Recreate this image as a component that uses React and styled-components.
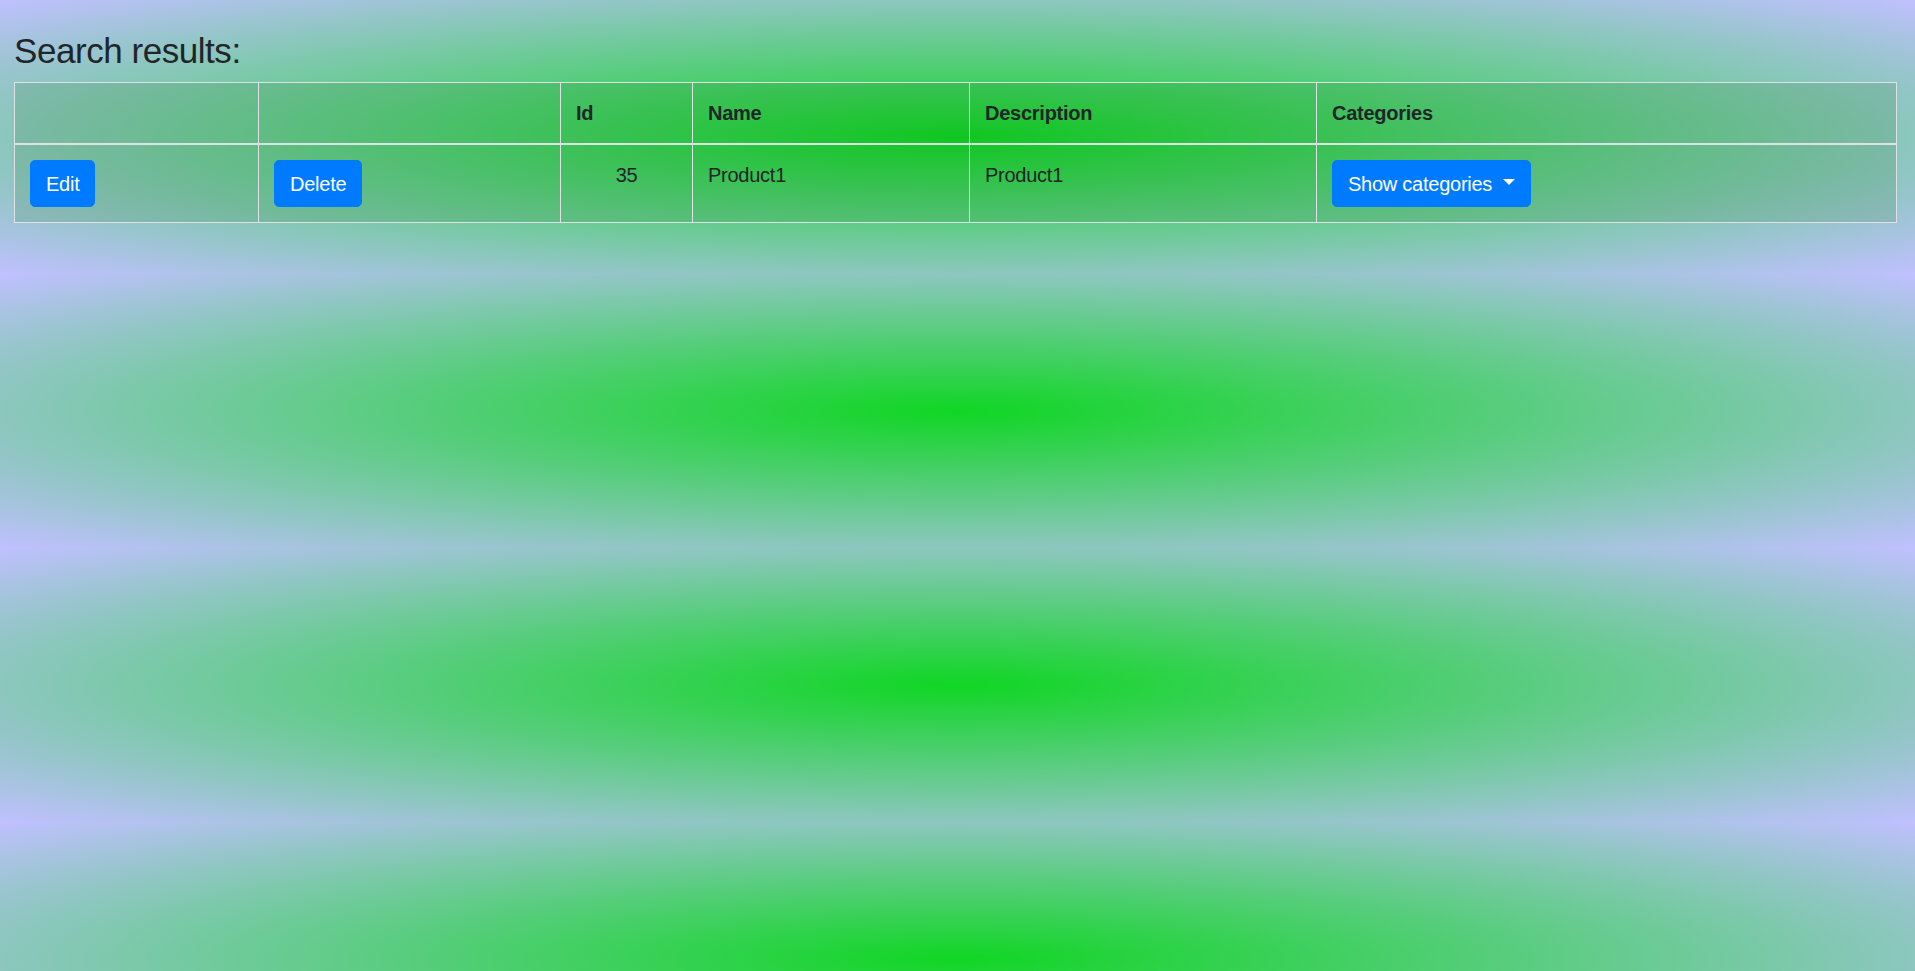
import React from "react";
import styled, { createGlobalStyle } from "styled-components";

const GlobalStyle = createGlobalStyle`
  html {
    background: radial-gradient(ellipse farthest-corner, rgb(16, 214, 36), rgb(192, 192, 255));
    background-size: 100% 274px;
    background-repeat: repeat;
    min-height: 100%;
  }
  body {
    margin: 0;
    font-family: "Liberation Sans", Arial, sans-serif;
    font-size: 20px;
    line-height: 1.5;
    color: #212529;
    letter-spacing: -0.25px;
  }
  * { box-sizing: border-box; }
`;

const Page = styled.div`
  padding: 30px 19px 0 14px;
`;

const Heading = styled.h3`
  margin: 0 0 10px;
  font-size: 35px;
  font-weight: 500;
  line-height: 1.2;
  letter-spacing: -0.45px;
`;

const Table = styled.table`
  width: 1882px;
  border-collapse: collapse;
  table-layout: fixed;
  background: rgba(20, 90, 10, 0.12);
`;

const HeadCell = styled.th`
  padding: 15px;
  border: 1px solid #dee2e6;
  border-bottom: 2px solid #dee2e6;
  text-align: left;
  vertical-align: bottom;
  font-weight: 700;
  line-height: 30px;
  height: 61px;
`;

const Cell = styled.td`
  padding: 15px;
  border: 1px solid #dee2e6;
  vertical-align: top;
  line-height: 30px;
  text-align: ${(p) => (p.$center ? "center" : "left")};
`;

const Button = styled.button`
  display: inline-flex;
  align-items: center;
  font-family: inherit;
  font-size: 20px;
  line-height: 30px;
  letter-spacing: inherit;
  color: #fff;
  background: #007bff;
  border: 1px solid #007bff;
  border-radius: 5px;
  padding: 7.5px 15px;
  cursor: pointer;
`;

const Caret = styled.span`
  display: inline-block;
  margin-left: 11px;
  width: 0;
  height: 0;
  border-top: 6px solid #fff;
  border-left: 6px solid transparent;
  border-right: 6px solid transparent;
  transform: translateY(-2px);
`;

const cols = [244, 302, 132, 277, 347, 580];

export default function App() {
  return (
    <>
      <GlobalStyle />
      <Page>
        <Heading>Search results:</Heading>
        <Table>
          <colgroup>
            {cols.map((w, i) => (
              <col key={i} style={{ width: w }} />
            ))}
          </colgroup>
          <thead>
            <tr>
              <HeadCell />
              <HeadCell />
              <HeadCell>Id</HeadCell>
              <HeadCell>Name</HeadCell>
              <HeadCell>Description</HeadCell>
              <HeadCell>Categories</HeadCell>
            </tr>
          </thead>
          <tbody>
            <tr>
              <Cell>
                <Button>Edit</Button>
              </Cell>
              <Cell>
                <Button>Delete</Button>
              </Cell>
              <Cell $center>35</Cell>
              <Cell>Product1</Cell>
              <Cell>Product1</Cell>
              <Cell>
                <Button>
                  Show categories
                  <Caret />
                </Button>
              </Cell>
            </tr>
          </tbody>
        </Table>
      </Page>
    </>
  );
}
